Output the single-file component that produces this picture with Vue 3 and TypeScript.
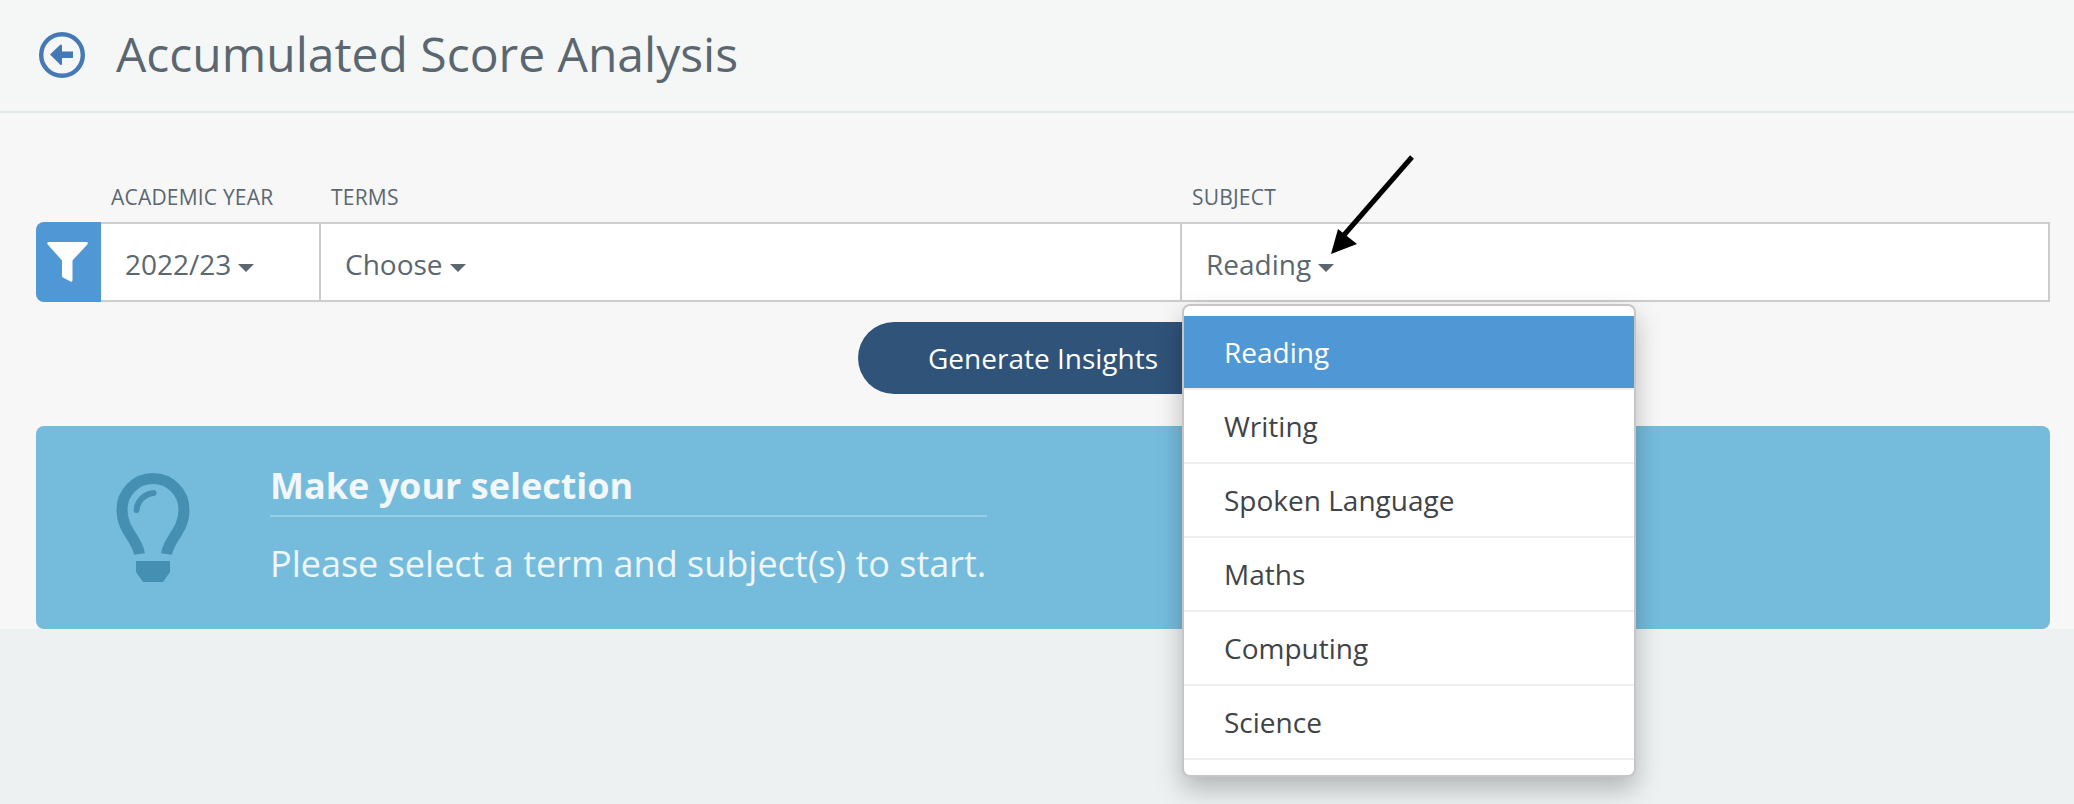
<script setup lang="ts">
const subjects: string[] = ['Reading', 'Writing', 'Spoken Language', 'Maths', 'Computing', 'Science']
</script>

<template>
  <div class="page">
    <header class="header">
      <svg class="back" width="46" height="46" viewBox="0 0 46 46">
        <circle cx="23" cy="23" r="20.8" fill="none" stroke="#4479b5" stroke-width="4.4" />
        <path d="M11 22.5 L21.5 12.5 Q23 12 23 14 V19.5 H34 V26 H23 V31.5 Q23 33.5 21.5 33 Z" fill="#4479b5" />
      </svg>
      <h1 class="title">Accumulated Score Analysis</h1>
    </header>

    <main class="main">
      <svg class="pointer" width="100" height="110" viewBox="0 0 100 110">
        <line x1="92" y1="8" x2="24" y2="86" stroke="#000" stroke-width="5" />
        <polygon points="11,105 18,80 37,95" fill="#000" />
      </svg>

      <div class="cols labels">
        <span class="label first">ACADEMIC YEAR</span>
        <span class="label">TERMS</span>
        <span class="label">SUBJECT</span>
      </div>

      <div class="cols bar">
        <div class="funnel">
          <svg width="65" height="80" viewBox="0 0 65 80">
            <path d="M12.5 20 H50.5 Q52.5 20 51.5 22.2 L36.5 38.5 V58 Q36.5 60.5 34.5 59.5 L27 55.5 Q26 55 26 54 V38.5 L11.5 22.2 Q10.8 20 12.5 20 Z" fill="#fff" />
          </svg>
        </div>
        <div class="cell year">2022/23<i class="caret"></i></div>
        <div class="cell terms">Choose<i class="caret"></i></div>
        <div class="cell subject">Reading<i class="caret"></i></div>

        <ul class="menu">
          <li v-for="(s, i) in subjects" :key="s" class="item" :class="{ active: i === 0 }">{{ s }}</li>
        </ul>
      </div>

      <div class="actions">
        <button class="generate" type="button">Generate Insights</button>
      </div>

      <section class="notice">
        <svg class="bulb" width="74" height="110" viewBox="0 0 74 110">
          <path d="M23.5 81 C21 65 6 58 6 36.5 A31 31 0 0 1 68 36.5 C68 58 53 65 50.5 81" fill="none" stroke="#458fb2" stroke-width="11" />
          <path d="M20.5 37 A19 19 0 0 1 37.5 20" fill="none" stroke="#458fb2" stroke-width="6" stroke-linecap="round" />
          <path d="M20 88 H54 V99 L47 109 H27 L20 99 Z" fill="#458fb2" />
        </svg>
        <div class="notice-body">
          <h2 class="notice-title">Make your selection</h2>
          <p class="notice-text">Please select a term and subject(s) to start.</p>
        </div>
      </section>
    </main>
  </div>
</template>

<style>
html, body { margin: 0; background: #edf1f2; }
</style>

<style scoped>
.page {
  font-family: "Open Sans", "Noto Sans", sans-serif;
  color: #5b6770;
  height: 804px;
  overflow: hidden;
  background: #edf1f2;
}
.header {
  height: 111px;
  box-sizing: content-box;
  display: flex;
  align-items: center;
  background: #f5f7f7;
  border-bottom: 2px solid #e1e8ea;
  padding-left: 39px;
}
.back { margin-top: -2px; flex: none; }
.title {
  margin: -4px 0 0 31px;
  font-size: 48px;
  font-weight: 400;
  line-height: 60px;
  color: #5b6770;
}
.main {
  position: relative;
  height: 516px;
  box-sizing: border-box;
  background: #f7f7f7;
  padding: 70px 24px 0 36px;
}
.pointer { position: absolute; left: 1320px; top: 36px; z-index: 3; }
.cols {
  display: grid;
  grid-template-columns: 65px 220px 861px 1fr;
}
.labels { height: 39px; }
.label {
  font-size: 21px;
  line-height: 28px;
  padding-left: 10px;
  color: #5b6770;
  letter-spacing: 0.2px;
  white-space: nowrap;
}
.label.first { grid-column: 2; padding-left: 10px; }
.bar {
  position: relative;
  height: 80px;
  box-sizing: border-box;
}
.funnel {
  background: #5097d5;
  border-radius: 8px 0 0 8px;
  height: 80px;
}
.funnel svg { display: block; }
.cell {
  height: 80px;
  box-sizing: border-box;
  background: #fff;
  border-top: 2px solid #ccc;
  border-bottom: 2px solid #ccc;
  font-size: 28px;
  line-height: 80px;
  color: #5b6770;
  white-space: nowrap;
}
.year { padding-left: 24px; border-right: 2px solid #ccc; }
.terms { padding-left: 24px; border-right: 2px solid #ccc; }
.subject { padding-left: 24px; border-right: 2px solid #ccc; }
.caret {
  display: inline-block;
  width: 0;
  height: 0;
  margin-left: 7px;
  vertical-align: middle;
  border-left: 8px solid transparent;
  border-right: 8px solid transparent;
  border-top: 8px solid #5b6770;
}
.menu {
  position: absolute;
  z-index: 2;
  left: 1146px;
  top: 82px;
  width: 454px;
  height: 473px;
  box-sizing: border-box;
  margin: 0;
  padding: 10px 0 0;
  list-style: none;
  background: #fff;
  border: 2px solid #c6c6c6;
  border-radius: 8px;
  box-shadow: 0 12px 26px rgba(0, 0, 0, 0.25);
}
.item {
  height: 74px;
  box-sizing: border-box;
  padding-left: 40px;
  font-size: 28px;
  line-height: 72px;
  color: #3f4448;
  border-bottom: 2px solid #efefef;
}
.item.active { background: #5097d5; color: #fff; }
.actions {
  display: flex;
  justify-content: center;
  margin-top: 20px;
}
.generate {
  width: 370px;
  height: 72px;
  border: 0;
  border-radius: 36px;
  background: #2f5379;
  color: #fff;
  font-family: inherit;
  font-size: 28px;
}
.notice {
  display: flex;
  margin-top: 32px;
  height: 203px;
  box-sizing: border-box;
  background: #75bcdc;
  border-radius: 8px;
  padding: 47px 0 0 80px;
}
.bulb { display: block; flex: none; }
.notice-body { margin-left: 80px; width: 717px; margin-top: -12px; }
.notice-title {
  margin: 0;
  font-size: 36px;
  line-height: 50px;
  font-weight: 700;
  color: #f2f7fa;
  border-bottom: 2px solid rgba(255, 255, 255, 0.25);
  padding-bottom: 4px;
}
.notice-text {
  margin: 24px 0 0;
  font-size: 36px;
  line-height: 46px;
  font-weight: 400;
  color: #eef6fa;
  white-space: nowrap;
}
</style>
